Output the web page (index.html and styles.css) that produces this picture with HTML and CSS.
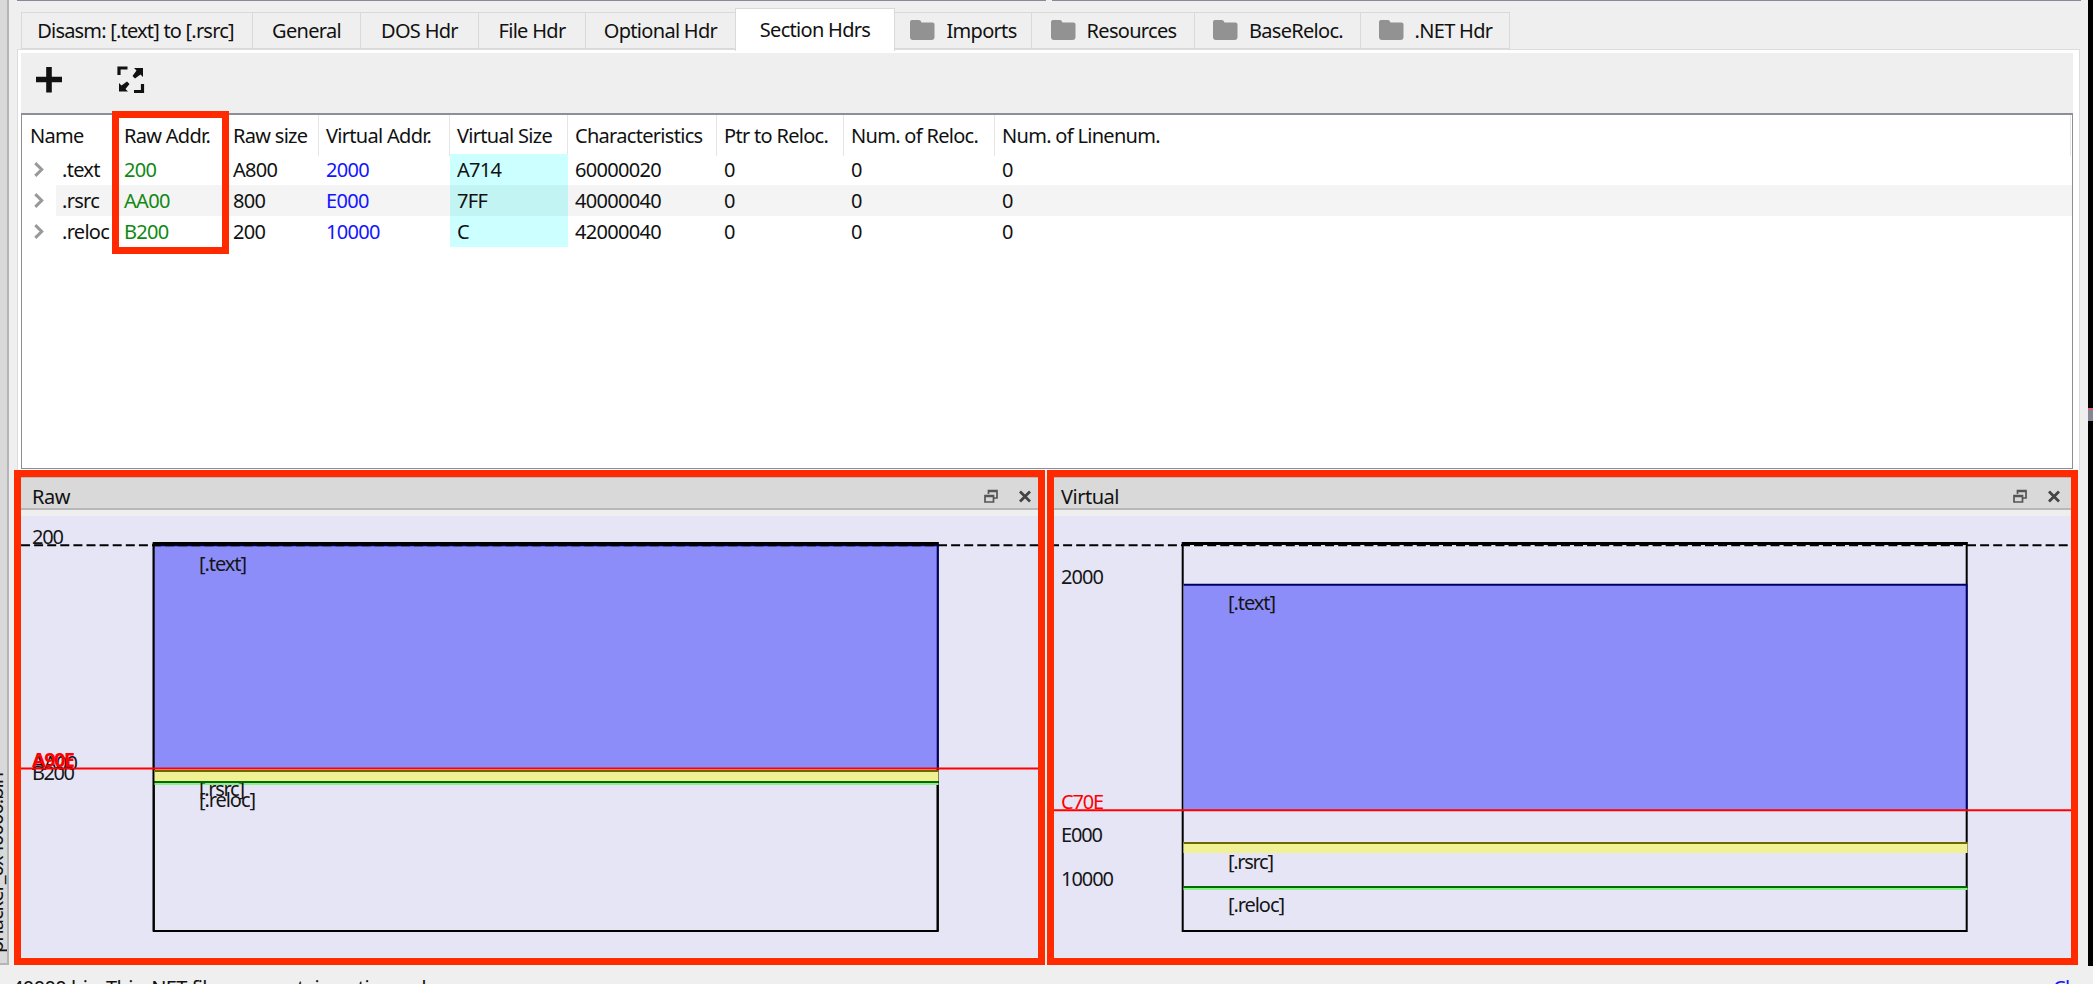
FILE: index.html
```
<!DOCTYPE html>
<html lang="en">
<head>
	<meta charset="UTF-8">
	<title>Section Hdrs</title>
	<link rel="stylesheet" href="styles.css">
</head>
<body>
<svg width="0" height="0" class="defs">
	<symbol id="folder" viewBox="0 0 26 22"><path d="M1 3q0-2 2-2h7q2 0 2.500 2.500h11q2 0 2 2V18q0 3-3 3H4q-3 0-3-3z" fill="#929292"/></symbol>
	<symbol id="float" viewBox="0 0 14 15"><path d="M4.500 5V1.500h8.500V9h-3M4.500 2.500H13M1 6.500h8.500V13H1zM1 7.500h8.500" fill="none" stroke="#555" stroke-width="1.700"/></symbol>
	<symbol id="close" viewBox="0 0 14 14"><path d="M2 2l10 10M12 2L2 12" fill="none" stroke="#444" stroke-width="2.800"/></symbol>
</svg>
<div class="window">
	<div class="side"><span>phacker_0x40000.bin</span></div>
	<div class="main">
		<div class="topline"><i></i><i></i></div>
		<div class="tabs">
			<div class="tab t1">Disasm: [.text] to [.rsrc]</div>
			<div class="tab">General</div>
			<div class="tab">DOS Hdr</div>
			<div class="tab">File Hdr</div>
			<div class="tab">Optional Hdr</div>
			<div class="tab active">Section Hdrs</div>
			<div class="tab"><svg><use href="#folder"/></svg>Imports</div>
			<div class="tab"><svg><use href="#folder"/></svg>Resources</div>
			<div class="tab"><svg><use href="#folder"/></svg>BaseReloc.</div>
			<div class="tab"><svg><use href="#folder"/></svg>.NET Hdr</div>
		</div>
		<div class="pane">
			<div class="toolbar">
				<svg width="27" height="27" viewBox="0 0 27 27"><path d="M13 1v25.500M0 13.500h26" stroke="#111" stroke-width="5.600"/></svg>
				<svg width="28" height="28" viewBox="0 0 28 28"><path d="M2 9V2h8.500M25.500 18v7.500H17" fill="none" stroke="#111" stroke-width="3.200"/><path d="M17 2h9v9l-2.500-2.500-5.500 4-2.500-2.500 4-5.500zM2 17l2.500 2.500 5.500-4 2.500 2.500-4 5 2.500 2.500H2z" fill="#111"/></svg>
			</div>
			<div class="table">
				<div class="row head"><span>Name</span><span>Raw Addr.</span><span>Raw size</span><span>Virtual Addr.</span><span>Virtual Size</span><span>Characteristics</span><span>Ptr to Reloc.</span><span>Num. of Reloc.</span><span>Num. of Linenum.</span></div>
				<div class="row"><span class="name"><svg viewBox="0 0 10 14"><path d="M2 1l6 6-6 6"/></svg>.text</span><span class="raw">200</span><span>A800</span><span class="va">2000</span><span class="vs">A714</span><span>60000020</span><span>0</span><span>0</span><span>0</span></div>
				<div class="row alt"><span class="name"><svg viewBox="0 0 10 14"><path d="M2 1l6 6-6 6"/></svg>.rsrc</span><span class="raw">AA00</span><span>800</span><span class="va">E000</span><span class="vs">7FF</span><span>40000040</span><span>0</span><span>0</span><span>0</span></div>
				<div class="row"><span class="name"><svg viewBox="0 0 10 14"><path d="M2 1l6 6-6 6"/></svg>.reloc</span><span class="raw">B200</span><span>200</span><span class="va">10000</span><span class="vs">C</span><span>42000040</span><span>0</span><span>0</span><span>0</span></div>
				<div class="mark"></div>
			</div>
		</div>
		<div class="docks">
			<div class="dock">
				<div class="title">Raw<svg class="float"><use href="#float"/></svg><svg class="close"><use href="#close"/></svg></div>
				<svg class="map" viewBox="21 516 1017 441">
					<rect x="153.700" y="543" width="784" height="388" fill="none" stroke="#000" stroke-width="2"/>
					<rect x="154" y="544" width="784" height="225" fill="#8d8dfa"/>
					<path d="M153.700 543v388M937.700 769v162" stroke="#000" stroke-width="2"/>
					<path d="M937.700 544v225" stroke="#000060" stroke-width="2"/>
					<path d="M153 543.500h785.500" stroke="#000" stroke-width="3"/>
					<path d="M154 545.500h784" stroke="#000060" stroke-width="1.500"/>
					<path d="M21 545.200h1017" stroke="#000" stroke-width="2" stroke-dasharray="9 4.100"/>
					<rect x="154.500" y="770" width="784" height="11" fill="#f0f095"/>
					<path d="M154.500 771h784" stroke="#6d6700" stroke-width="2"/>
					<path d="M154.500 784h784" stroke="#90ee90" stroke-width="2"/>
					<path d="M154.500 782h784" stroke="#006d00" stroke-width="2"/>
					<text x="32" y="543.500" textLength="32">200</text>
					<text x="32" y="769.500" textLength="46">AA00</text>
					<text x="32" y="780" textLength="43">B200</text>
					<text x="32" y="767" textLength="43" class="red bold">A90E</text>
					<path d="M21 768.600h1017" stroke="#f00" stroke-width="2"/>
					<text x="199" y="570.500" textLength="48">[.text]</text>
					<clipPath id="below"><rect x="190" y="783" width="100" height="40"/></clipPath>
					<text x="199" y="796" textLength="46" clip-path="url(#below)">[.rsrc]</text>
					<text x="199" y="806.500" textLength="57">[.reloc]</text>
				</svg>
			</div>
			<div class="dock">
				<div class="title">Virtual<svg class="float"><use href="#float"/></svg><svg class="close"><use href="#close"/></svg></div>
				<svg class="map" viewBox="1054 516 1017 441">
					<rect x="1182.700" y="543" width="784" height="388" fill="none" stroke="#000" stroke-width="2"/>
					<path d="M1182 543.500h785.500" stroke="#000" stroke-width="3"/>
					<path d="M1050 545.200h1021" stroke="#000" stroke-width="2" stroke-dasharray="9 4.100"/>
					<rect x="1183.500" y="584" width="784" height="226" fill="#8d8dfa"/>
					<path d="M1183.500 584.700h783.200V810" fill="none" stroke="#000060" stroke-width="2"/>
					<rect x="1183.500" y="842" width="784" height="11" fill="#f0f095"/>
					<path d="M1183.500 843h784" stroke="#6d6700" stroke-width="2"/>
					<path d="M1183.500 889h784" stroke="#90ee90" stroke-width="2"/>
					<path d="M1183.500 887h784" stroke="#006d00" stroke-width="2"/>
					<text x="1061" y="583.500" textLength="43">2000</text>
					<text x="1061" y="809" textLength="43" class="red">C70E</text>
					<path d="M1054 810.300h1017" stroke="#f00" stroke-width="2"/>
					<text x="1061" y="841.500" textLength="42">E000</text>
					<text x="1061" y="885.500" textLength="53">10000</text>
					<text x="1228" y="610" textLength="48">[.text]</text>
					<text x="1228" y="868.500" textLength="46">[.rsrc]</text>
					<text x="1228" y="912" textLength="57">[.reloc]</text>
				</svg>
			</div>
		</div>
	</div>
	<div class="edge"></div>
</div>
<div class="status"><span>40000.bin</span><span class="msg">This .NET file may contain native code.</span><span class="check">Check</span></div>
</body>
</html>
```
FILE: styles.css
```
*{padding:0;margin:0;box-sizing:border-box;}
body{
	width: 2093px;
	height: 984px;
	overflow:hidden;
	background:#efefef;
	font:20px/30px "Noto Sans","Open Sans",sans-serif;
	letter-spacing:-.7px;
	color:#111;
	white-space:nowrap;
}
.defs{
	display:block;
}
.window{
	display:flex;
	height: 966px;
}
/*left strip with the vertical file name*/
.side{
	width: 9px;
	height: 965px;
	background:#d9d9d9;
	border-right:2px solid #b5b5b5;
	border-bottom:2px solid #b5b5b5;
	display:flex;
	justify-content:flex-end;
	align-items:flex-end;
	overflow:hidden;
	padding-bottom:10px;
}
.side span{
	writing-mode:vertical-rl;
	transform: rotate(180deg);
	line-height: 22px;
	letter-spacing:-1px;
	flex:none;
}
.main{
	width: 2079px;
	padding-left:5px;
	display:flex;
	flex-direction:column;
}
.topline{
	display:flex;
	gap:6px;
	height: 8px;
	padding-left:3px;
}
.topline i{
	width: 1029px;
	height: 1px;
	background:#8a8a96;
}
/*tabs*/
.tabs{
	display:grid;
	grid-template-columns:232px 108px 118px 107px 150px 159px 137px 163px 166px 149px;
	align-items:end;
	height: 43px;
	padding-left:7px;
	margin-bottom:-2px;
	position:relative;
	z-index:1;
}
.tab{
	height: 37px;
	margin-bottom:2px;
	border:1px solid #d9d9d9;
	border-left-width:0;
	display:flex;
	justify-content:center;
	align-items:center;
	gap:11px;
	padding-top:1px;
}
.t1{
	border-left-width:1px;
	padding-right:3px;
	letter-spacing:-.8px;
}
.tab svg{
	width: 26px;
	height: 22px;
	margin-top:-3px;
}
.tab.active{
	height: 43px;
	margin:0 0 0 -1px;
	background:#fff;
	border-bottom:0;
	border-left-width:1px;
	padding-bottom:2px;
}
.pane{
	margin-left:3px;
	width: 2063px;
	height: 421px;
	border:1px solid #dcdcdc;
	border-bottom:0;
	background:#fff;
	padding:3px 6px 0 3px;
}
.toolbar{
	height: 60px;
	background:#efefef;
	display:flex;
	gap:54px;
	padding:13px 15px;
}
/*section table*/
.table{
	position:relative;
	height: 356px;
	border:1px solid #8c8f98;
	border-top-width:2px;
}
.row{
	display:grid;
	grid-template-columns:94px 110px 93px 131px 118px 149px 127px 151px 1fr;
	height: 31px;
	line-height: 31px;
}
.row span{
	padding-left:7px;
}
.row span:nth-child(-n+2){
	padding-left:8px;
}
.head{
	height: 39px;
	line-height: 41px;
	margin-right:1px;
}
.head span{
	border-right:1px solid #e5e5e5;
}
.row span.name{
	display:flex;
	align-items:center;
	gap:17px;
	padding-left:10px;
}
.name svg{
	width: 13px;
	height: 15px;
	fill:none;
	stroke:#999;
	stroke-width:2.8;
}
.alt{
	background:linear-gradient(90deg,#fff 34px,#f4f4f4 34px);
}
.raw{
	color:#118811;
}
.va{
	color:#1414ff;
}
.vs{
	background:#ccffff;
}
.alt .vs{
	background:#c3f4f4;
}
.mark{
	position:absolute;
	left:90px;
	top:-4px;
	width: 117px;
	height: 143px;
	border:7px solid #ff2a00;
}
/*memory maps*/
.docks{
	display:flex;
	gap:2px;
}
.dock{
	width: 1031px;
	height: 495px;
	border:7px solid #ff2a00;
	background:#efefef;
}
.title{
	display:flex;
	align-items:center;
	height: 33px;
	background:#d9d9d9;
	border-top:1px solid #b8b8b8;
	border-bottom:2px solid #b8b8b8;
	padding:7px 6px 0 11px;
	letter-spacing:-.5px;
}
.dock:last-child .title{
	padding-left:7px;
	padding-right:10px;
}
.title svg{
	width: 14px;
	height: 15px;
}
.title .float{
	margin-left:auto;
	margin-right:20px;
}
.map{
	display:block;
	width: 1017px;
	height: 441px;
	margin-top:6px;
	background:#e6e5f5;
}
.map text{
	font-size:20px;
	fill:#151515;
	letter-spacing:0;
}
.map .red{
	fill:#f00;
}
.map .bold{
	font-weight:bold;
}
/*black strip of the desktop behind the window*/
.edge{
	width: 5px;
	height: 966px;
	background:linear-gradient(#000 408px,#e0606c 408px,#e0606c 410px,#858595 410px,#858595 421px,#000 421px);
}
.status{
	display:flex;
	height: 18px;
	padding:7px 23px 0 12px;
	overflow:hidden;
	letter-spacing:-.6px;
}
.msg{
	margin-left:7px;
}
.check{
	margin-left:auto;
	width: 17px;
	overflow:hidden;
	color:#1414ff;
}
```
